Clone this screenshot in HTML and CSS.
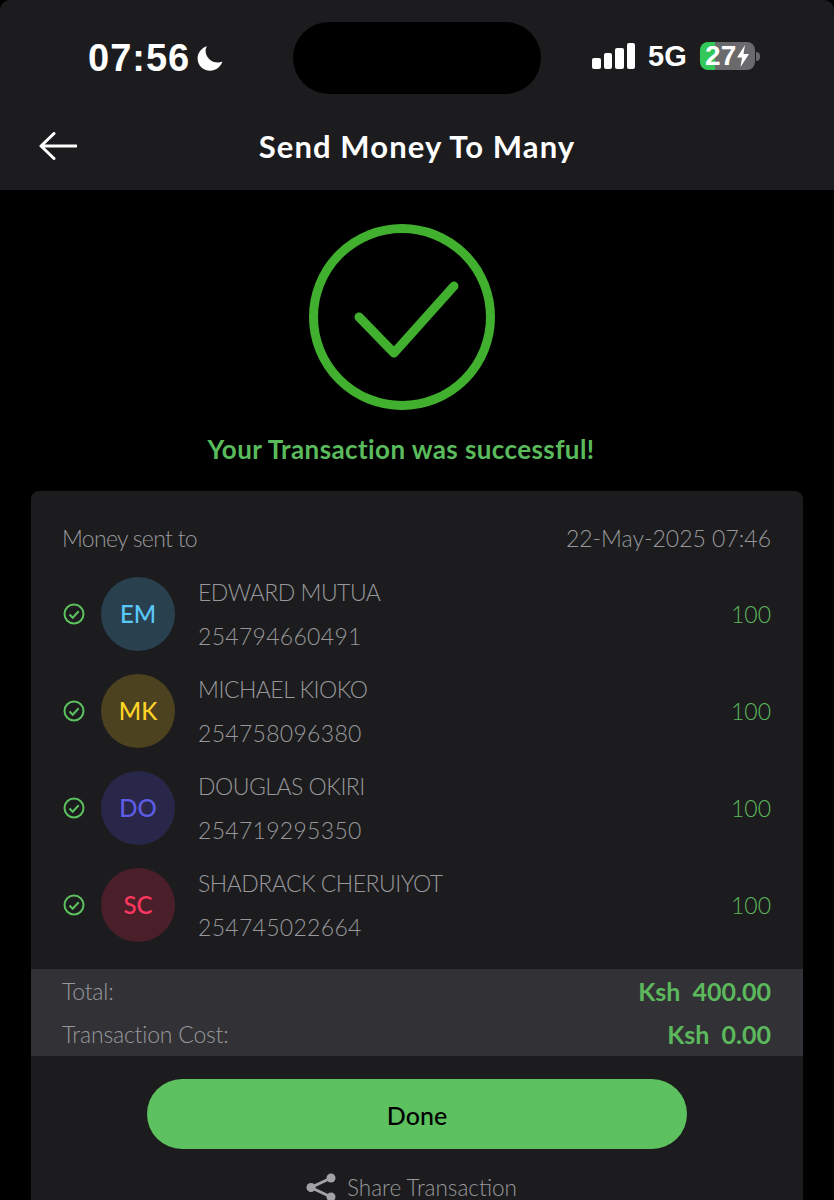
FILE: index.html
```html
<!DOCTYPE html>
<html lang="en">
<head>
    <meta charset="UTF-8">
    <meta name="viewport" content="width=device-width, initial-scale=1.0">
    <title>Send Money To Many</title>
    <link rel="stylesheet" href="styles.css">
</head>
<body>
<header class="top">
    <div class="status">
        <div class="status-left">
            <span class="clock">07:56</span>
            <svg class="moon" viewBox="0 0 27 26"><path d="M10.500 1C4.600 2.600.6 7.700.6 13.500c0 6.900 5.600 12.300 12.500 12.300 5.600 0 10.600-3.800 12.300-9.200-1.300.6-2.900.9-4.500.9-6.900 0-12.300-5.400-12.300-12.100 0-1.600.8-3.100 1.400-4.400z" fill="#fff"/></svg>
        </div>
        <div class="island"></div>
        <div class="status-right">
            <div class="signal"><i class="s1"></i><i class="s2"></i><i class="s3"></i><i class="s4"></i></div>
            <span class="net">5G</span>
            <div class="battery">
                <span>27</span>
                <svg class="bolt" viewBox="0 0 12 22"><path d="M8 0L0 12.500h5L3.500 22 12 9H6.500z" fill="#fff"/></svg>
            </div>
            <div class="nub"></div>
        </div>
    </div>
    <div class="titlebar">
        <svg class="back" viewBox="0 0 38 28"><path d="M37 14H2M15 1.500L2 14l13 12.500" fill="none" stroke="#fff" stroke-width="3" stroke-linecap="round" stroke-linejoin="round"/></svg>
        <h1>Send Money To Many</h1>
    </div>
</header>

<main class="content">
    <svg class="tick" viewBox="0 0 186 186">
        <circle cx="93" cy="93" r="88.500" fill="none" stroke="#42b02f" stroke-width="9"/>
        <path d="M50 93L85 129 145 62" fill="none" stroke="#42b02f" stroke-width="9" stroke-linecap="round" stroke-linejoin="round"/>
    </svg>
    <p class="success">Your Transaction was successful!</p>

    <section class="card">
        <div class="card-head">
            <span class="sent-to">Money sent to</span>
            <span>22-May-2025 07:46</span>
        </div>

        <div class="row">
            <svg class="ok" viewBox="0 0 22 22"><circle cx="11" cy="11" r="9.500"/><path d="M6.500 11.500l3.200 3.200 6-6.500"/></svg>
            <div class="avatar blue">EM</div>
            <div class="person"><div class="name">EDWARD MUTUA</div><div class="phone">254794660491</div></div>
            <div class="amount">100</div>
        </div>
        <div class="row">
            <svg class="ok" viewBox="0 0 22 22"><circle cx="11" cy="11" r="9.500"/><path d="M6.500 11.500l3.200 3.200 6-6.500"/></svg>
            <div class="avatar yellow">MK</div>
            <div class="person"><div class="name">MICHAEL KIOKO</div><div class="phone">254758096380</div></div>
            <div class="amount">100</div>
        </div>
        <div class="row">
            <svg class="ok" viewBox="0 0 22 22"><circle cx="11" cy="11" r="9.500"/><path d="M6.500 11.500l3.200 3.200 6-6.500"/></svg>
            <div class="avatar purple">DO</div>
            <div class="person"><div class="name">DOUGLAS OKIRI</div><div class="phone">254719295350</div></div>
            <div class="amount">100</div>
        </div>
        <div class="row">
            <svg class="ok" viewBox="0 0 22 22"><circle cx="11" cy="11" r="9.500"/><path d="M6.500 11.500l3.200 3.200 6-6.500"/></svg>
            <div class="avatar red">SC</div>
            <div class="person"><div class="name">SHADRACK CHERUIYOT</div><div class="phone">254745022664</div></div>
            <div class="amount">100</div>
        </div>

        <div class="totals">
            <div class="total-row"><span>Total:</span><b>Ksh&nbsp; 400.00</b></div>
            <div class="total-row"><span>Transaction Cost:</span><b>Ksh&nbsp; 0.00</b></div>
        </div>

        <button class="done">Done</button>

        <div class="share">
            <svg class="share-icon" viewBox="0 0 30 28">
                <path d="M25 5L5 14.500 25 24" fill="none" stroke="#a3a3a5" stroke-width="3"/>
                <circle cx="25" cy="5" r="4.500" fill="#a3a3a5"/>
                <circle cx="5" cy="14.500" r="4.500" fill="#a3a3a5"/>
                <circle cx="25" cy="24" r="4.500" fill="#a3a3a5"/>
            </svg>
            <span>Share Transaction</span>
        </div>
    </section>
</main>
</body>
</html>
```

FILE: styles.css
```css
html, body {
    margin: 0;
    padding: 0;
    background-color: #000;
}

body {
    height: 1200px;
    overflow: hidden;
    font-family: Lato, "Open Sans", sans-serif;
    color: #fff;
}

.top {
    height: 190px;
    background-color: #1c1c1e;
    border-radius: 10px 10px 0 0;
}

.status {
    display: grid;
    grid-template-columns: 293px 248px 1fr;
    height: 94px;
    padding-top: 22px;
    box-sizing: border-box;
}

.status-left {
    display: flex;
    align-items: center;
    padding-left: 88px;
    height: 72px;
}

.clock {
    font-family: "Liberation Sans", sans-serif;
    font-weight: 700;
    font-size: 38px;
    letter-spacing: 1px;
}

.moon {
    width: 27px;
    height: 26px;
    margin-left: 7px;
    margin-top: -1px;
}

.island {
    height: 72px;
    background-color: #000;
    border-radius: 36px;
}

.status-right {
    display: flex;
    align-items: center;
    height: 68px;
    padding-left: 51px;
}

.signal {
    display: flex;
    align-items: flex-end;
    gap: 3px;
    height: 26px;
}

.signal i {
    display: block;
    width: 8.500px;
    background-color: #fff;
    border-radius: 2px;
}

.s1 { height: 11px; }
.s2 { height: 16px; }
.s3 { height: 21px; }
.s4 { height: 26px; }

.net {
    margin-left: 13px;
    font-family: "Liberation Sans", sans-serif;
    font-weight: 700;
    font-size: 29px;
}

.battery {
    display: flex;
    align-items: center;
    justify-content: center;
    gap: 1px;
    width: 55px;
    height: 28px;
    margin-left: 13px;
    border-radius: 8px;
    background: linear-gradient(to right, #34c759 0, #34c759 27%, #6a6a6c 27%);
    font-family: "Liberation Sans", sans-serif;
    font-weight: 700;
    font-size: 28px;
}

.bolt {
    width: 12px;
    height: 22px;
}

.nub {
    width: 4px;
    height: 9px;
    margin-left: 1px;
    background-color: #6a6a6c;
    border-radius: 0 4px 4px 0;
}

.titlebar {
    position: relative;
    height: 96px;
    display: flex;
    align-items: center;
    justify-content: center;
}

.titlebar h1 {
    margin: 7px 0 0;
    font-size: 31px;
    font-weight: 700;
    letter-spacing: 1.100px;
}

.back {
    position: absolute;
    left: 39px;
    top: 38px;
    width: 38px;
    height: 28px;
}

.content {
    display: flex;
    flex-direction: column;
    align-items: center;
}

.tick {
    width: 186px;
    height: 186px;
    margin-top: 34px;
    margin-left: -31px;
}

.success {
    margin: 22px 0 0 -32px;
    color: #5abb5c;
    font-size: 26px;
    font-weight: 700;
    letter-spacing: .4px;
    line-height: 34px;
}

.card {
    width: 772px;
    margin-top: 25px;
    padding-bottom: 40px;
    background-color: #1c1c1e;
    border-radius: 8px 8px 0 0;
    color: #98989c;
}

.card-head {
    display: flex;
    justify-content: space-between;
    padding: 32px 32px 0 31px;
    font-size: 23px;
    font-weight: 300;
    line-height: 30px;
}

.sent-to {
    letter-spacing: -.7px;
}

.row {
    display: flex;
    align-items: center;
    height: 97px;
    padding: 0 32px 0 31px;
    font-size: 23px;
    font-weight: 300;
}

.card-head + .row {
    margin-top: 12px;
}

.ok {
    width: 22px;
    height: 22px;
    margin-left: 1px;
    fill: none;
    stroke: #5cc15e;
    stroke-width: 2;
}

.avatar {
    display: flex;
    align-items: center;
    justify-content: center;
    width: 74px;
    height: 74px;
    margin-left: 16px;
    border-radius: 50%;
    font-size: 24px;
    font-weight: 500;
}

.blue { background-color: #29414f; color: #5ac8fa; }
.yellow { background-color: #4d4220; color: #ffd426; }
.purple { background-color: #28274a; color: #5e5ce6; }
.red { background-color: #4a1f2a; color: #ff375f; }

.person {
    flex: 1;
    margin-left: 23px;
    line-height: 44px;
}

.name {
    letter-spacing: -.5px;
}

.phone {
    letter-spacing: .3px;
}

.amount {
    color: #5cb85c;
}

.totals {
    height: 87px;
    margin-top: 16px;
    padding: 0 32px 0 31px;
    background-color: #323236;
    font-size: 23px;
    font-weight: 300;
}

.total-row {
    display: flex;
    justify-content: space-between;
    align-items: center;
    height: 43px;
}

.total-row span {
    letter-spacing: -.2px;
}

.total-row b {
    color: #5cb85c;
    font-size: 25px;
    font-weight: 700;
}

.done {
    display: block;
    width: 540px;
    height: 70px;
    margin: 23px auto 0;
    padding-top: 3px;
    border: none;
    border-radius: 35px;
    background-color: #5cc15e;
    color: #000;
    font-family: Lato, sans-serif;
    font-size: 25px;
    font-weight: 500;
}

.share {
    display: flex;
    align-items: center;
    justify-content: center;
    gap: 11px;
    margin-top: 24px;
    padding-right: 11px;
    font-size: 22.500px;
    font-weight: 300;
}

.share-icon {
    width: 30px;
    height: 28px;
}
```
